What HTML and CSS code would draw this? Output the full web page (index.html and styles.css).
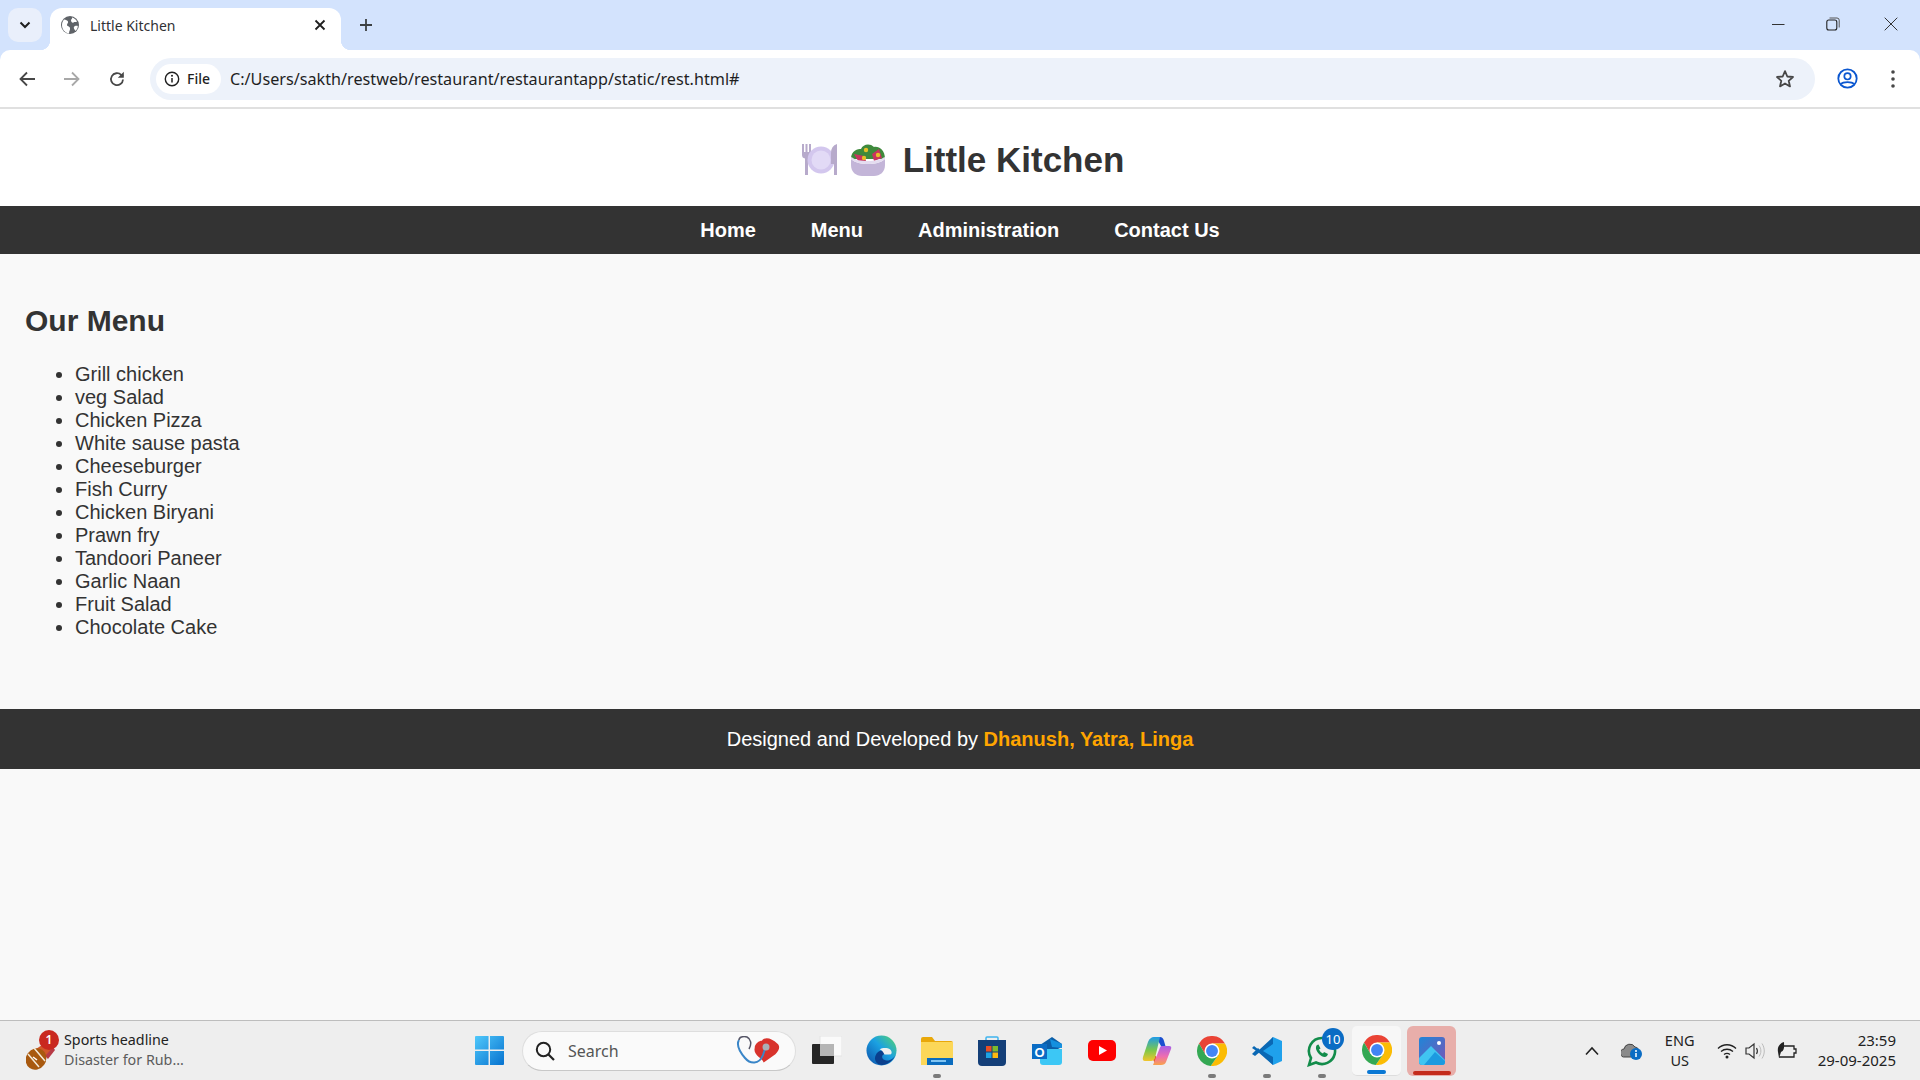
FILE: index.html
```html
<!DOCTYPE html>
<html lang="en">
<head>
<meta charset="utf-8">
<title>Little Kitchen</title>
<link rel="stylesheet" href="styles.css">
</head>
<body>
<div class="browser">
  <div class="tabstrip">
    <div class="tabsearch"><svg width="14" height="14" viewBox="0 0 14 14"><path d="M2.500 4.500 7 9l4.500-4.500" fill="none" stroke="#1f1f1f" stroke-width="2"/></svg></div>
    <div class="tab">
      <svg class="favicon" width="18" height="18" viewBox="0 0 18 18"><circle cx="9" cy="9" r="9" fill="#5f6368"/><path d="M3 3.500c2 .5 3.500.5 4 2s-1 2-1 3.500 2.500 1 3 3-1 3-1 5.500C4 17 1 13.500 1 9c0-2 .8-4 2-5.500zM11 1.500c2 .5 4 2 5 4-1 .8-2.500.2-3.500 1s-2.500-.5-2.500-2 1.500-1.500 1-3zM16.800 10c0 2-1 4-2.500 5-.5-1.500-1.500-2-1.500-3.500s2.500-2 4-1.500z" fill="#fff"/></svg>
      <span class="tabtitle">Little Kitchen</span>
      <svg class="tabclose" width="12" height="12" viewBox="0 0 12 12"><path d="M1.500 1.500l9 9m0-9l-9 9" stroke="#1f1f1f" stroke-width="1.800" fill="none"/></svg>
    </div>
    <svg class="newtab" width="14" height="14" viewBox="0 0 14 14"><path d="M7 1v12M1 7h12" stroke="#3c4043" stroke-width="1.800" fill="none"/></svg>
    <div class="winctl">
      <svg class="winbtn" width="14" height="14" viewBox="0 0 14 14"><path d="M1 7.500h12.500" stroke="#333" stroke-width="1"/></svg>
      <svg class="winbtn" width="14" height="14" viewBox="0 0 14 14"><rect x=".8" y="3" width="10" height="10" rx="2" fill="none" stroke="#222" stroke-width="1.100"/><path d="M3.500 1h7.500a2.200 2.200 0 0 1 2.200 2.200v7.300" fill="none" stroke="#555" stroke-width="1"/></svg>
      <svg class="winbtn close" width="14" height="14" viewBox="0 0 14 14"><path d="M.7.700l12.600 12.600m0-12.600L.7 13.300" stroke="#333" stroke-width="1"/></svg>
    </div>
  </div>
  <div class="toolbar">
    <svg class="navbtn" width="18" height="18" viewBox="0 0 18 18"><path d="M17 9H3m6-6.500L2.500 9 9 15.500" fill="none" stroke="#474747" stroke-width="1.800"/></svg>
    <svg class="navbtn" width="18" height="18" viewBox="0 0 18 18"><path d="M1 9h14M9 2.500 15.500 9 9 15.500" fill="none" stroke="#a8a8a8" stroke-width="1.800"/></svg>
    <svg class="navbtn" width="18" height="18" viewBox="0 0 18 18"><path d="M15 9.500a6 6 0 1 1-1.800-4.600L15 6.500" fill="none" stroke="#474747" stroke-width="1.800"/><path d="M15.800 1.800v6h-6z" fill="#474747"/></svg>
    <div class="omnibox">
      <div class="chip">
        <svg width="16" height="16" viewBox="0 0 16 16"><circle cx="8" cy="8" r="6.700" fill="none" stroke="#1f1f1f" stroke-width="1.400"/><path d="M8 7v4.500" stroke="#1f1f1f" stroke-width="1.500"/><circle cx="8" cy="4.800" r="1" fill="#1f1f1f"/></svg>
        <span>File</span>
      </div>
      <span class="url">C:/Users/sakth/restweb/restaurant/restaurantapp/static/rest.html#</span>
      <svg class="star" width="20" height="20" viewBox="0 0 20 20"><path d="M10 2.200l2.300 5.300 5.700.5-4.300 3.800 1.300 5.600-5-3-5 3 1.300-5.600L2 8l5.700-.5z" fill="none" stroke="#474747" stroke-width="1.800" stroke-linejoin="round"/></svg>
    </div>
    <svg class="profile" width="21" height="21" viewBox="0 0 21 21"><circle cx="10.500" cy="10.500" r="9.200" fill="none" stroke="#0b57d0" stroke-width="1.800"/><circle cx="10.500" cy="8.300" r="3.200" fill="none" stroke="#0b57d0" stroke-width="1.700"/><path d="M4 16c2-2.600 11-2.600 13 0" fill="none" stroke="#0b57d0" stroke-width="1.700"/></svg>
    <svg class="dots" width="6" height="18" viewBox="0 0 6 18"><circle cx="3" cy="2" r="1.800" fill="#474747"/><circle cx="3" cy="9" r="1.800" fill="#474747"/><circle cx="3" cy="16" r="1.800" fill="#474747"/></svg>
  </div>
</div>

<main class="page">
  <header class="site-header">
    <h1>
      <svg class="emoji" width="36" height="36" viewBox="0 0 36 36"><rect x="0" y="2" width="2" height="10" fill="#b7aacb"/><rect x="3.500" y="2" width="2" height="10" fill="#b7aacb"/><rect x="7" y="2" width="2" height="10" fill="#b7aacb"/><path d="M0 10h9v3q0 3-3 3.500V33H3V16.500Q0 16 0 13z" fill="#b7aacb"/><circle cx="19" cy="18" r="13.500" fill="#d3c7ee"/><circle cx="19" cy="18" r="9.500" fill="#e2daf6"/><path d="M35 2v31h-3V22h-3V11q0-7 6-9z" fill="#b7aacb"/></svg>
      <svg class="emoji" width="36" height="36" viewBox="0 0 36 36"><path d="M1 17C1 8 8 7 11 7c2-5 9-6 13-2 5-1 11 3 11 12z" fill="#3f8a3c"/><path d="M4 12l10 2 2 5-8 0zM22 12l7-5 3 9-8 3z" fill="#c9345f"/><circle cx="16" cy="8" r="2.200" fill="#e8c027"/><circle cx="14" cy="16" r="2.200" fill="#e8c027"/><circle cx="28" cy="13" r="2.200" fill="#e8c027"/><path d="M1 17c4 4 11 5 17 5s13-1 17-5v6c0 7-5 11-11 11H12C6 34 1 30 1 23z" fill="#c3b5d8"/><path d="M1 17c4 4 11 5 17 5s13-1 17-5c0-1 0-2-.5-2-4 3-10 4-16.500 4S5 18 1.500 15c-.5 0-.5 1-.5 2z" fill="#e4dcf0"/></svg>
      <span class="brand">Little Kitchen</span>
    </h1>
  </header>
  <nav class="site-nav">
    <a href="#">Home</a>
    <a href="#">Menu</a>
    <a href="#">Administration</a>
    <a href="#">Contact Us</a>
  </nav>
  <section class="menu">
    <h2>Our Menu</h2>
    <ul>
      <li>Grill chicken</li>
      <li>veg Salad</li>
      <li>Chicken Pizza</li>
      <li>White sause pasta</li>
      <li>Cheeseburger</li>
      <li>Fish Curry</li>
      <li>Chicken Biryani</li>
      <li>Prawn fry</li>
      <li>Tandoori Paneer</li>
      <li>Garlic Naan</li>
      <li>Fruit Salad</li>
      <li>Chocolate Cake</li>
    </ul>
  </section>
  <footer class="site-footer">Designed and Developed by <strong>Dhanush, Yatra, Linga</strong></footer>
</main>

<div class="taskbar">
  <div class="widget">
    <div class="widget-icon">
      <svg width="34" height="36" viewBox="0 0 34 36"><path d="M10 14 22 6l6 6-10 11z" fill="#d2572a"/><path d="M19 21l8-9 2 3-7 9z" fill="#b73a45"/><ellipse cx="10" cy="24" rx="10" ry="11" transform="rotate(35 10 24)" fill="#a8590f"/><path d="M2 19l11 13M8 13l11 13" stroke="#f4ead8" stroke-width="1.500" fill="none"/><path d="M7 22l4 3" stroke="#fff" stroke-width="1.500"/></svg>
      <span class="badge">1</span>
    </div>
    <div class="widget-text">
      <span class="w1">Sports headline</span>
      <span class="w2">Disaster for Rub...</span>
    </div>
  </div>

  <div class="taskicons">
    <div class="tb">
      <svg width="29" height="29" viewBox="0 0 30 30"><defs><linearGradient id="win" x1="0" y1="0" x2="1" y2="1"><stop offset="0" stop-color="#4fc8fb"/><stop offset="1" stop-color="#0672cf"/></linearGradient></defs><path d="M0 1q0-1 1-1h13v14H0zM15.500 0H29q1 0 1 1v13H15.500zM0 15.500h14V30H1q-1 0-1-1zM15.500 15.500H30V29q0 1-1 1H15.500z" fill="url(#win)"/></svg>
    </div>
    <div class="search">
      <svg width="20" height="20" viewBox="0 0 20 20"><circle cx="8.500" cy="8.500" r="6.700" fill="none" stroke="#222" stroke-width="2"/><path d="M13.500 13.500l5.500 5.500" stroke="#222" stroke-width="2.200"/></svg>
      <span>Search</span>
      <svg class="doodle" width="50" height="30" viewBox="0 0 50 30"><path d="M31 2c3-5 11-3 17 3 4 3 2 8-2 12l-13 9c-2-5-12-8-10-16 0-5 5-8 8-8z" transform="translate(-2 3) scale(.9)" fill="#d8332c"/><path d="M3 4c-3 5 1 12 6 18 5 6 14 7 18-3l2-6" fill="none" stroke="#3a86c8" stroke-width="2"/><path d="M3 4c0-3 4-4 8-3 4 2 5 7 2 12" fill="none" stroke="#556" stroke-width="1.500"/><circle cx="30" cy="11" r="3.500" fill="#aab0b5"/></svg>
    </div>
    <div class="tb">
      <svg width="30" height="30" viewBox="0 0 30 30"><rect x="8" y="0" width="22" height="20" fill="#fafafa" stroke="#e4e4e4"/><rect x="0" y="8" width="22" height="20" rx="1" fill="#262626"/><rect x="8" y="8" width="14" height="12" fill="#b5b5b5"/></svg>
    </div>
    <div class="tb">
      <svg width="31" height="31" viewBox="0 0 32 32"><defs><linearGradient id="edge" x1="0" y1="1" x2="1" y2="0"><stop offset="0" stop-color="#0b4fa8"/><stop offset=".55" stop-color="#1ba1e2"/><stop offset="1" stop-color="#58d66b"/></linearGradient></defs><circle cx="16" cy="16" r="15.500" fill="url(#edge)"/><path d="M31 19c-2 6-7 11-14 12-7 0-9-6-7-10 1-3 4-5 7-5 5 0 8 2 8 4-2-1-5-1-7 0s-2 5 2 6 9-1 11-7z" fill="#0a3f8d"/><path d="M14 15c3-2 8-2 11 0 2 2 2 5 0 5h-6c-2-4-4-5-5-5z" fill="#eef0f0"/></svg>
    </div>
    <div class="tb">
      <svg width="32" height="28" viewBox="0 0 32 28"><path d="M0 2q0-2 2-2h9l3 4h16q2 0 2 2v20q0 2-2 2H2q-2 0-2-2z" fill="#e9a80a"/><rect y="5" width="32" height="23" fill="#fcd758"/><path d="M6 21h26v7H6z" fill="#0a6cbe"/><path d="M10 23h15v2H10z" fill="#7fc4f2"/></svg>
      <i class="dot"></i>
    </div>
    <div class="tb">
      <svg width="28" height="30" viewBox="0 0 28 30"><path d="M8 4V2q0-1 1-1h10q1 0 1 1v2" fill="none" stroke="#3fb4ee" stroke-width="1.500"/><path d="M0 4h28v22q0 4-4 4H4q-4 0-4-4z" fill="#143f78"/><rect x="8" y="10" width="5.500" height="5.500" fill="#ea4f25"/><rect x="14.500" y="10" width="5.500" height="5.500" fill="#7dba2d"/><rect x="8" y="16.500" width="5.500" height="5.500" fill="#1da3e5"/><rect x="14.500" y="16.500" width="5.500" height="5.500" fill="#fcb910"/></svg>
    </div>
    <div class="tb">
      <svg width="30" height="28" viewBox="0 0 30 28"><path d="M8 8 20 0l10 7v3L8 21z" fill="#0b5ea8"/><path d="M8 12h22v13q0 3-3 3H11q-3 0-3-3z" fill="#3cc7f5"/><path d="M18 2l12 5v4l-10-1z" fill="#1490df"/><rect x="0" y="7" width="15" height="15" fill="#0b6cc4"/><text x="7.500" y="19.500" class="o-mark">O</text></svg>
    </div>
    <div class="tb">
      <svg width="30" height="22" viewBox="0 0 30 22"><rect width="28" height="21" x="1" y="0" rx="5" fill="#fe0000"/><path d="M12 6l8 4.500-8 4.500z" fill="#fff"/></svg>
    </div>
    <div class="tb">
      <svg width="30" height="30" viewBox="0 0 30 30"><defs><linearGradient id="cop1" x1="0" y1="0" x2="0" y2="1"><stop offset="0" stop-color="#1f9be8"/><stop offset=".55" stop-color="#7cc84a"/><stop offset="1" stop-color="#f2c52c"/></linearGradient><linearGradient id="cop2" x1="0" y1="0" x2="0" y2="1"><stop offset="0" stop-color="#a85fe6"/><stop offset=".55" stop-color="#ee6db0"/><stop offset="1" stop-color="#f9a24a"/></linearGradient></defs><path d="M9 20l5 9h3l-3-9z" fill="#e8532a"/><path d="M14 1h4q3 0 4 4l2 7-5-2z" fill="#1a4fd0"/><path d="M9 2q1-1 3-1h6l-5 21q-1 3-4 3H3q-3 0-2-4L6 6q1-3 3-4z" fill="url(#cop1)"/><path d="M19 10h8q3 0 2 3l-5 13q-1 3-5 3h-8l6-15q1-3 2-4z" fill="url(#cop2)"/></svg>
    </div>
    <div class="tb">
      <svg class="chrome" width="30" height="30" viewBox="0 0 48 48"><path d="M3.200 12A24 24 0 0 1 44.800 12H24L13.600 30z" fill="#ea4335"/><path d="M44.800 12A24 24 0 0 1 21.900 47.900L34.400 30 24 12z" fill="#fbbc04"/><path d="M21.900 47.900A24 24 0 0 1 3.200 12L13.600 30H34.400z" fill="#34a853"/><circle cx="24" cy="24" r="12" fill="#fff"/><circle cx="24" cy="24" r="9.500" fill="#4285f4"/></svg>
      <i class="dot"></i>
    </div>
    <div class="tb">
      <svg width="30" height="30" viewBox="0 0 30 30"><path d="M21 1 30 5v20l-9 4-12-12z" fill="#1fa1ec"/><path d="M21 1 7 14l-5-4-2 2 6 4 15 13 0-8L11 15l10-7z" fill="#0a68b4"/><path d="M0 18l3 2 6-5-3-3z" fill="#0a68b4"/></svg>
      <i class="dot"></i>
    </div>
    <div class="tb">
      <svg width="30" height="32" viewBox="0 0 30 32"><path d="M15 3a13 13 0 1 1-6 24.500L2 30l2-7A13 13 0 0 1 15 3z" fill="none" stroke="#128c4a" stroke-width="2.600"/><path d="M10 10c-2 2-1 6 2 9s6 4 8 2l1-2-4-2-1 1.500c-2-1-3-2-4-4l1.500-1-2-4z" fill="#128c4a"/></svg>
      <span class="count">10</span>
      <i class="dot"></i>
    </div>
    <div class="tb active">
      <svg class="chrome" width="30" height="30" viewBox="0 0 48 48"><path d="M3.200 12A24 24 0 0 1 44.800 12H24L13.600 30z" fill="#ea4335"/><path d="M44.800 12A24 24 0 0 1 21.900 47.900L34.400 30 24 12z" fill="#fbbc04"/><path d="M21.900 47.900A24 24 0 0 1 3.200 12L13.600 30H34.400z" fill="#34a853"/><circle cx="24" cy="24" r="12" fill="#fff"/><circle cx="24" cy="24" r="9.500" fill="#4285f4"/></svg>
      <i class="bar blue"></i>
    </div>
    <div class="tb flagged">
      <svg width="26" height="28" viewBox="0 0 26 28"><defs><linearGradient id="ph" x1="0" y1="0" x2="1" y2="1"><stop offset="0" stop-color="#1f86d8"/><stop offset="1" stop-color="#7b55b5"/></linearGradient></defs><rect width="26" height="28" rx="3" fill="url(#ph)"/><circle cx="20" cy="6" r="2" fill="#fff"/><path d="M0 21 12 9l14 14v2q0 3-3 3H3q-3 0-3-3z" fill="#40c5f1"/><path d="M5 28 16 15l10 9v1q0 3-3 3z" fill="#1c9ae0"/></svg>
      <i class="bar red"></i>
    </div>
  </div>

  <div class="tray">
    <svg class="t-chev" width="16" height="10" viewBox="0 0 16 10"><path d="M2 8.500 8 2l6 6.500" fill="none" stroke="#222" stroke-width="1.600"/></svg>
    <svg class="t-cloud" width="22" height="20" viewBox="0 0 22 20"><path d="M4 16a4 4 0 0 1-1-8 6 6 0 0 1 11-2 5 5 0 0 1 4 5v5z" fill="#8a8a8a" stroke="#444"/><circle cx="15" cy="13" r="6" fill="#0a6cc4"/><path d="M15 12v4" stroke="#fff" stroke-width="1.500"/><circle cx="15" cy="10" r="1" fill="#fff"/></svg>
    <div class="t-lang"><span>ENG</span><span>US</span></div>
    <svg class="t-wifi" width="20" height="16" viewBox="0 0 20 16"><path d="M1 5.500c5-5 13-5 18 0M4 8.500c3.500-3 8.500-3 12 0M7 11.500c2-1.500 4-1.500 6 0" fill="none" stroke="#222" stroke-width="1.300"/><circle cx="10" cy="14" r="1.500" fill="#222"/></svg>
    <svg class="t-vol" width="20" height="18" viewBox="0 0 20 18"><path d="M1 6h3l5-4v14l-5-4H1z" fill="none" stroke="#333" stroke-width="1.200"/><path d="M11.500 6c1.200 2 1.200 4 0 6" fill="none" stroke="#333" stroke-width="1.200"/><path d="M14 3.500c2.500 3.500 2.500 7.500 0 11M17 1.500c3 4.500 3 10.500 0 15" fill="none" stroke="#bbb" stroke-width="1"/></svg>
    <svg class="t-bat" width="22" height="18" viewBox="0 0 22 18"><path d="M6 4h12v3h2v4h-2v4H3" fill="none" stroke="#222" stroke-width="1.300"/><path d="M2 10C1 5 4 1 8 0c0 4 1 8-3 10l-2 6z" fill="#222"/></svg>
    <div class="t-clock"><span>23:59</span><span>29-09-2025</span></div>
  </div>
</div>
</body>
</html>
```
FILE: styles.css
```css
* { box-sizing: border-box; }
html, body { margin: 0; height: 100%; }
body {
  width: 1920px;
  height: 1080px;
  overflow: hidden;
  display: flex;
  flex-direction: column;
  background: #f9f9f9;
  font-family: "Liberation Sans", Arial, sans-serif;
  color: #333;
}
svg { display: block; flex: none; }

/* browser chrome */
.browser { height: 109px; flex: none; background: #d3e3fd; font-family: "Noto Sans", sans-serif; }
.tabstrip { height: 50px; display: flex; align-items: flex-start; padding: 8px 0 0 8px; }
.tabsearch { width: 34px; height: 34px; border-radius: 10px; background: #e9effb; display: flex; align-items: center; justify-content: center; }
.tab { position: relative; width: 291px; height: 42px; margin-left: 8px; background: #fff; border-radius: 12px 12px 0 0; display: flex; align-items: center; padding: 0 15px 8px 11px; }
.tab::before, .tab::after { content: ""; position: absolute; bottom: 0; width: 10px; height: 10px; }
.tab::before { left: -10px; background: radial-gradient(circle at 0 0, transparent 10px, #fff 10.500px); }
.tab::after { right: -10px; background: radial-gradient(circle at 100% 0, transparent 10px, #fff 10.500px); }
.tabtitle { margin-left: 11px; font-size: 14px; color: #303134; flex: 1; }
.newtab { margin: 10px 0 0 18px; }
.winctl { margin-left: auto; display: flex; gap: 41px; padding: 9px 22px 0 0; }
.winbtn.close { margin-left: 3px; }
.toolbar { height: 59px; background: #fff; border-radius: 10px 10px 0 0; border-bottom: 2px solid #e0e0e0; display: flex; align-items: center; padding: 0 20px 0 18px; }
.navbtn { margin-right: 27px; }
.navbtn:nth-child(3) { margin-right: 24px; }
.omnibox { width: 1665px; height: 42px; background: #edf2fa; border-radius: 21px; display: flex; align-items: center; padding: 0 20px 0 6px; }
.chip { width: 65px; height: 30px; background: #fff; border-radius: 15px; display: flex; align-items: center; gap: 7px; padding-left: 8px; font-size: 14px; font-weight: 500; color: #1f1f1f; }
.url { margin-left: 9px; font-size: 16.200px; color: #1f1f1f; flex: 1; white-space: nowrap; }
.profile { margin-left: 22px; }
.dots { margin-left: 32px; }

/* page */
.page { flex: 1; min-height: 0; display: flex; flex-direction: column; }
.site-header { height: 97px; background: #fff; display: flex; align-items: center; justify-content: center; padding-top: 5px; }
h1 { margin: 0; display: flex; align-items: center; font-size: 35px; font-weight: 700; color: #333; padding-left: 6px; }
.emoji { margin-right: 12px; }
.emoji + .emoji { margin-right: 17px; }
.site-nav { height: 48px; background: #333; display: flex; align-items: center; justify-content: center; gap: 55px; }
.site-nav a { color: #fff; font-size: 20px; font-weight: 700; text-decoration: none; }
.menu { padding: 25px 25px 0; height: 455px; }
h2 { margin: 25px 0 25px; font-size: 30px; line-height: 34px; color: #333; }
ul { margin: 0; padding: 0 0 0 50px; font-size: 20px; line-height: 23px; }
.site-footer { height: 60px; background: #333; color: #fff; font-size: 20px; display: flex; align-items: center; justify-content: center; white-space: pre; }
.site-footer strong { color: #ffa500; }

/* taskbar */
.taskbar { height: 60px; flex: none; background: #eee; border-top: 1px solid #bdbdbd; display: flex; align-items: center; font-family: "Noto Sans", sans-serif; color: #222; }
.widget { width: 462px; flex: none; display: flex; align-items: center; padding-left: 26px; height: 100%; }
.widget-icon { position: relative; width: 38px; height: 40px; display: flex; align-items: flex-end; }
.badge { position: absolute; left: 13px; top: -1px; width: 20px; height: 20px; border-radius: 50%; background: #c9281f; color: #fff; font-size: 12px; font-weight: 600; display: flex; align-items: center; justify-content: center; }
.widget-text { display: flex; flex-direction: column; font-size: 14.300px; line-height: 20px; margin-top: -2px; }
.w2 { color: #5c5c5c; }
.taskicons { display: flex; align-items: center; height: 100%; }
.tb { position: relative; width: 55px; height: 100%; display: flex; align-items: center; justify-content: center; flex: none; }
.search { width: 274px; height: 40px; margin: 0 3px 0 5px; border-radius: 20px; background: #fafafa; border: 1px solid #dedede; border-bottom-color: #c8c8c8; display: flex; align-items: center; padding-left: 12px; gap: 13px; font-size: 16px; color: #555; }
.doodle { margin-left: auto; margin-right: 9px; }
.dot { position: absolute; bottom: 2px; left: 50%; margin-left: -4px; width: 8px; height: 4px; border-radius: 2px; background: #7a7a7a; }
.count { position: absolute; top: 7px; right: 5px; width: 22px; height: 22px; border-radius: 50%; background: #0a6cc4; color: #fff; font-size: 13px; display: flex; align-items: center; justify-content: center; }
.active { height: 50px; width: 49px; margin: 0 3px; background: #f7f7f7; border-radius: 5px; border-bottom: 1px solid #ddd; }
.flagged { height: 50px; width: 49px; margin: 0 3px; background: #e8aeaa; border-radius: 6px; }
.bar { position: absolute; bottom: 1px; left: 50%; height: 4px; border-radius: 2px; }
.bar.blue { width: 19px; margin-left: -9.500px; background: #0a78d4; }
.bar.red { width: 38px; margin-left: -19px; background: #c42b1c; }
.o-mark { font: 700 13px "Liberation Sans", sans-serif; fill: #fff; text-anchor: middle; }
.tray { margin-left: auto; display: flex; align-items: center; padding-right: 24px; font-size: 15px; }
.t-chev { margin-right: 21px; }
.t-cloud { margin-right: 17px; }
.t-lang { display: flex; flex-direction: column; align-items: center; line-height: 20px; width: 40px; margin-right: 17px; font-size: 14.500px; margin-top: -2px; }
.t-wifi { margin-right: 8px; }
.t-vol { margin-right: 11px; }
.t-bat { margin-right: 20px; }
.t-clock { display: flex; flex-direction: column; align-items: flex-end; line-height: 20px; margin-top: -2px; }
```
